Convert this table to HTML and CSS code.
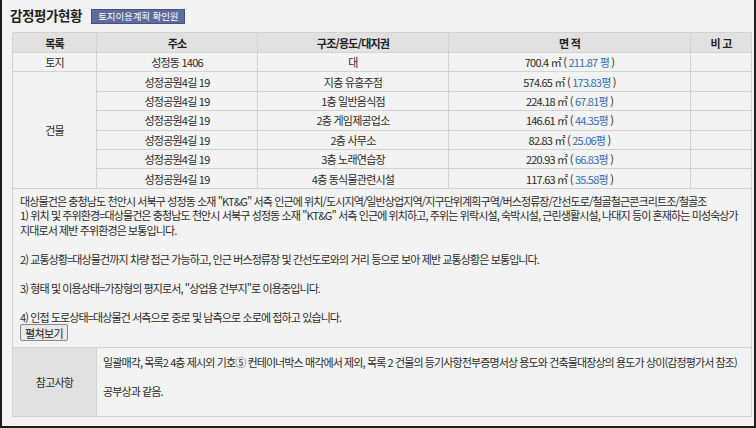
FILE: index.html
```html
<!DOCTYPE html>
<html lang="ko">
<head>
<meta charset="utf-8">
<link rel="stylesheet" href="styles.css">
</head>
<body>
<div class="frame">
  <div class="head">
    <h1 class="title">감정평가현황</h1>
    <span class="badge">토지이용계획 확인원</span>
  </div>
  <table class="grid">
    <colgroup>
      <col class="c1"><col class="c2"><col class="c3"><col class="c4"><col class="c5">
    </colgroup>
    <thead>
      <tr><th>목록</th><th>주소</th><th>구조/용도/대지권</th><th>면 적</th><th>비 고</th></tr>
    </thead>
    <tbody>
      <tr><td>토지</td><td>성정동 1406</td><td>대</td><td>700.4 ㎡ ( <span class="blue">211.87 평</span> )</td><td></td></tr>
      <tr><td rowspan="6">건물</td><td>성정공원4길 19</td><td>지층 유흥주점</td><td>574.65 ㎡ ( <span class="blue">173.83평</span> )</td><td></td></tr>
      <tr><td>성정공원4길 19</td><td>1층 일반음식점</td><td>224.18 ㎡ ( <span class="blue">67.81평</span> )</td><td></td></tr>
      <tr><td>성정공원4길 19</td><td>2층 게임제공업소</td><td>146.61 ㎡ ( <span class="blue">44.35평</span> )</td><td></td></tr>
      <tr><td>성정공원4길 19</td><td>2층 사무소</td><td>82.83 ㎡ ( <span class="blue">25.06평</span> )</td><td></td></tr>
      <tr><td>성정공원4길 19</td><td>3층 노래연습장</td><td>220.93 ㎡ ( <span class="blue">66.83평</span> )</td><td></td></tr>
      <tr><td>성정공원4길 19</td><td>4층 동식물관련시설</td><td>117.63 ㎡ ( <span class="blue">35.58평</span> )</td><td></td></tr>
      <tr class="desc-row">
        <td colspan="5" class="desc">
          <p>대상물건은 충청남도 천안시 서북구 성정동 소재 "KT&amp;G" 서측 인근에 위치/도시지역/일반상업지역/지구단위계획구역/버스정류장/간선도로/철골철근콘크리트조/철골조<br>1) 위치 및 주위환경=대상물건은 충청남도 천안시 서북구 성정동 소재 "KT&amp;G" 서측 인근에 위치하고, 주위는 위락시설, 숙박시설, 근린생활시설, 나대지 등이 혼재하는 미성숙상가<br>지대로서 제반 주위환경은 보통입니다.<br><br>2) 교통상황=대상물건까지 차량 접근 가능하고, 인근 버스정류장 및 간선도로와의 거리 등으로 보아 제반 교통상황은 보통입니다.<br><br>3) 형태 및 이용상태=가장형의 평지로서, "상업용 건부지"로 이용중입니다.<br><br>4) 인접 도로상태=대상물건 서측으로 중로 및 남측으로 소로에 접하고 있습니다.</p>
          <button class="more" type="button">펼쳐보기</button>
        </td>
      </tr>
      <tr class="ref-row">
        <th class="ref-label">참고사항</th>
        <td colspan="4" class="ref">
          <p>일괄매각, 목록2 4층 제시외 기호⑤ 컨테이너박스 매각에서 제외, 목록 2 건물의 등기사항전부증명서상 용도와 건축물대장상의 용도가 상이(감정평가서 참조)<br><br>공부상과 같음.</p>
        </td>
      </tr>
    </tbody>
  </table>
</div>
</body>
</html>
```

FILE: styles.css
```css
html, body {
  margin: 0;
  padding: 0;
  background: #f3f3f3;
}
body {
  font-family: "Noto Sans CJK KR", "Noto Sans", sans-serif;
  font-size: 11px;
  color: #2b2b2b;
}
.frame {
  box-sizing: border-box;
  width: 756px;
  height: 428px;
  border-left: 2px solid #1e1e1e;
  border-right: 2px solid #1e1e1e;
  border-bottom: 2px solid #1e1e1e;
  background: #f3f3f3;
  padding: 0 3px 0 8px;
  overflow: hidden;
}
.head {
  display: flex;
  align-items: center;
  height: 28px;
  padding-top: 2px;
  margin-bottom: 2px;
}
.title {
  margin: 0;
  font-size: 13.5px;
  font-weight: bold;
  letter-spacing: -0.4px;
  color: #222;
  line-height: 16px;
  margin-top: -3px;
}
.badge {
  margin-left: 9px;
  background: #5d6c9c;
  border: 1px solid #44527f;
  color: #fff;
  font-size: 9.5px;
  line-height: 13px;
  padding: 0 6px;
  letter-spacing: -0.1px;
}
.grid {
  margin-left: 2px;
  width: 739px;
  border-collapse: collapse;
  table-layout: fixed;
  letter-spacing: -0.78px;
}
.c1 { width: 84px; }
.c2 { width: 161px; }
.c3 { width: 191px; }
.c4 { width: 242px; }
.c5 { width: 61px; }
.grid th, .grid td {
  border: 1px solid #d3d3d3;
  padding: 0;
  text-align: center;
  line-height: 14px;
}
.grid thead th {
  background: #e1e1e1;
  height: 19px;
  font-weight: bold;
  color: #222;
}
.grid tbody td {
  height: 18.4px;
}
.blue {
  color: #2f6fc4;
}
.grid tbody td.desc {
  text-align: left;
  height: auto;
  padding: 5px 7px 6px 7px;
  vertical-align: top;
}
.desc p, .ref p {
  letter-spacing: -0.89px;
}
.desc p {
  margin: 0;
  line-height: 14.5px;
  white-space: nowrap;
}
.more {
  font-family: inherit;
  font-size: 11px;
  letter-spacing: -0.6px;
  color: #222;
  background: #e9e9e9;
  border: 1px solid #8a8a8a;
  border-radius: 2px;
  padding: 0 4px;
  height: 17px;
  line-height: 14px;
  margin: 0;
}
.ref-label {
  background: #e1e1e1;
  font-weight: normal;
  color: #2b2b2b;
  height: 68px;
}
.grid tbody td.ref {
  text-align: left;
  vertical-align: top;
  padding: 7px 6px 0 6px;
}
.ref p {
  margin: 0;
  line-height: 14.5px;
  white-space: nowrap;
}
```
